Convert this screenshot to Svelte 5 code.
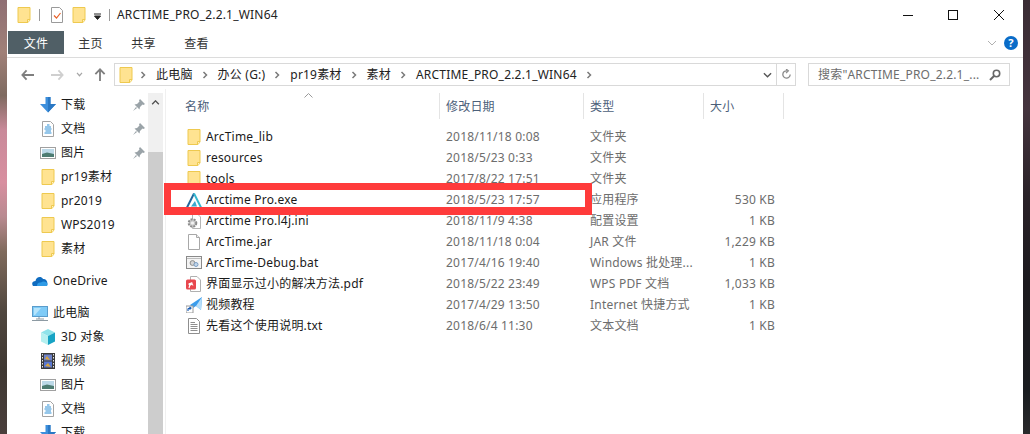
<script>
  const side = [
    { t: '下载', i: 'down', pin: true },
    { t: '文档', i: 'docs', pin: true },
    { t: '图片', i: 'pics', pin: true },
    { t: 'pr19素材', i: 'folder' },
    { t: 'pr2019', i: 'folder' },
    { t: 'WPS2019', i: 'folder' },
    { t: '素材', i: 'folder' },
    { t: 'OneDrive', i: 'cloud', top: true, gap: true },
    { t: '此电脑', i: 'pc', top: true, gap: true },
    { t: '3D 对象', i: 'cube' },
    { t: '视频', i: 'film' },
    { t: '图片', i: 'pics' },
    { t: '文档', i: 'docs' },
    { t: '下载', i: 'down' }
  ];
  const files = [
    ['ArcTime_lib', 'folder', '2018/11/18 0:08', '文件夹', ''],
    ['resources', 'folder', '2018/5/23 0:33', '文件夹', ''],
    ['tools', 'folder', '2017/8/22 17:51', '文件夹', ''],
    ['Arctime Pro.exe', 'arc', '2018/5/23 17:57', '应用程序', '530 KB'],
    ['Arctime Pro.l4j.ini', 'ini', '2018/11/9 4:38', '配置设置', '1 KB'],
    ['ArcTime.jar', 'blank', '2018/11/18 0:04', 'JAR 文件', '1,229 KB'],
    ['ArcTime-Debug.bat', 'bat', '2017/4/16 19:40', 'Windows 批处理...', '1 KB'],
    ['界面显示过小的解决方法.pdf', 'pdf', '2018/5/22 23:49', 'WPS PDF 文档', '1,033 KB'],
    ['视频教程', 'link', '2017/4/29 13:50', 'Internet 快捷方式', '1 KB'],
    ['先看这个使用说明.txt', 'txt', '2018/6/4 11:30', '文本文档', '1 KB']
  ];
  const crumbs = ['此电脑', '办公 (G:)', 'pr19素材', '素材', 'ARCTIME_PRO_2.2.1_WIN64'];
</script>

{#snippet chev()}
  <svg class="chev" viewBox="0 0 6 8"><path d="M1.5 1 L4.5 4 L1.5 7" fill="none" stroke="#7a7a7a" stroke-width="1.5" /></svg>
{/snippet}

{#snippet icon(n)}
  <svg class="ic" viewBox="0 0 16 16">
    {#if n === 'folder'}
      <path d="M2 .5 H14 V13 L12 15.5 H2 Z" fill="#ffe391" stroke="#eec94f" />
      <path d="M11.5 15.5 V12.5 H14" fill="#fff3c4" stroke="#eec94f" />
    {:else if n === 'down'}
      <path d="M5.5 0 H10.5 V7 H16 L8 15.5 L0 7 H5.5 Z" fill="#3d8fdc" />
      <path d="M8 0 H10.5 V7 H16 L8 15.5 Z" fill="#2a78c4" />
    {:else if n === 'docs'}
      <path d="M2.5 .5 H10.5 L13.5 3.5 V15.5 H2.5 Z" fill="#fff" stroke="#a3a3a3" />
      <path d="M5 6 H11 M4.5 8 H11.5 M5.5 10 H11 M4.5 12 H11.5 M7 4 H9.5" stroke="#2f8fd6" stroke-width="1.1" />
    {:else if n === 'pics'}
      <rect x=".5" y="2.5" width="15" height="11" fill="#fff" stroke="#a0a0a0" />
      <rect x="2" y="4" width="12" height="8" fill="#bcd9e8" />
      <path d="M2 9 L7 7.5 L14 9 V12 H2 Z" fill="#4d7c72" />
    {:else if n === 'cloud'}
      <path d="M1 13 C-1 10 1 8 3.5 8 C4 4 9 2.5 11 6 C14 5.5 16.5 9 15 13 Z" fill="#0f6cc0" />
      <path d="M5 13 C5 10 7 9 9 9.5 C11 7.5 15 8.5 15.5 11 L15 13 Z" fill="#2f9be6" />
    {:else if n === 'pc'}
      <rect x=".5" y="1.5" width="15" height="10" fill="#7fcbf7" stroke="#5a9ccb" />
      <path d="M2 3 H9 L3 10 H2 Z" fill="#b6e4fb" />
      <path d="M7 12 V14 M0 15.5 H16 M4 14 H12" stroke="#8d9aa3" />
    {:else if n === 'cube'}
      <path d="M8 0 L15 3.5 L8 7 L1 3.5 Z" fill="#8fe3ea" />
      <path d="M1 3.5 L8 7 V16 L1 12.5 Z" fill="#b5f0f0" />
      <path d="M15 3.5 L8 7 V16 L15 12.5 Z" fill="#17a3c4" />
    {:else if n === 'film'}
      <rect x="1" y="0" width="14" height="16" fill="#3a3a3a" />
      <rect x="4" y="1.5" width="8" height="6" fill="#6f83c9" />
      <rect x="4" y="8.5" width="8" height="6" fill="#5a78d0" />
      <path d="M5 6 L7 3 L10 7 Z M5 13 L8 10 L11 14 Z" fill="#d9a53a" />
      <path d="M2.5 1 V15 M13.5 1 V15" stroke="#e6e6e6" stroke-width="1" stroke-dasharray="1.5 1.5" />
    {:else if n === 'arc'}
      <path d="M1 15.5 L8 1.5" stroke="#22689c" stroke-width="2" fill="none" />
      <path d="M8 1.5 L15 15.5" stroke="#35b8d0" stroke-width="2" fill="none" />
      <path d="M5 14.5 L9 9 L11 14.5 Z" fill="#3aa9cf" />
    {:else if n === 'ini'}
      <path d="M6.5 .5 H11 L14.5 4 V15.5 H6.5 Z" fill="#fff" stroke="#b5b5b5" />
      <circle cx="6.5" cy="10" r="3.8" fill="#c9c9c9" stroke="#8c8c8c" stroke-width="2" stroke-dasharray="2 1.1" />
      <circle cx="6.5" cy="10" r="1.6" fill="#f2f2f2" />
    {:else if n === 'blank'}
      <path d="M2.5 .5 H10.5 L13.5 3.5 V15.5 H2.5 Z" fill="#fff" stroke="#a8a8a8" />
      <path d="M10.5 .5 V3.5 H13.5" fill="#eee" stroke="#a8a8a8" />
    {:else if n === 'bat'}
      <rect x=".5" y="1.5" width="15" height="12" fill="#f4f4f4" stroke="#8a8a8a" />
      <path d="M1 3.5 H15" stroke="#bdbdbd" />
      <circle cx="6.5" cy="8" r="2.4" fill="#d5d5d5" stroke="#8c8c8c" />
      <circle cx="10" cy="9.5" r="2" fill="#c3d6ea" stroke="#7b9ec4" />
    {:else if n === 'pdf'}
      <path d="M4.5 .5 H11 L14.5 4 V15.5 H4.5 Z" fill="#fff" stroke="#b0b0b0" />
      <rect x="0" y="3.5" width="10" height="10" rx="1.5" fill="#e8474e" />
      <path d="M3 12 C4 8 5 6 6 7 C7 8 3 10 3 8 C3 7 7 8 7 9.5" fill="none" stroke="#fff" stroke-width="1.1" />
    {:else if n === 'link'}
      <path d="M4 8 L16 0 L15 13 L10 9 L7 11 Z" fill="#3a9cec" />
      <path d="M16 0 L10 9 L15 13 Z" fill="#b7def9" />
      <rect x="0" y="9" width="7" height="7" fill="#fff" stroke="#9a9a9a" />
      <path d="M2 14 V12 C2 11.5 3 11 4.5 11 M3.5 10 L5 11 L3.5 12.5" fill="none" stroke="#1d5fb5" stroke-width="1.2" />
    {:else if n === 'txt'}
      <path d="M2.5 .5 H10.5 L13.5 3.5 V15.5 H2.5 Z" fill="#fff" stroke="#8f8f8f" />
      <path d="M4.5 4.5 H9 M4.5 6.5 H11.5 M4.5 8.5 H11.5 M4.5 10.5 H11.5 M4.5 12.5 H11.5" stroke="#8f8f8f" />
    {/if}
  </svg>
{/snippet}

<div class="screen">
  <div class="wall left"></div>
  <div class="win">
    <header class="title">
      <span class="t-folder">{@render icon('folder')}</span>
      <i class="sep"></i>
      <svg class="ic t-check" viewBox="0 0 16 16">
        <path d="M2.5 .5 H10.5 L13.5 3.5 V15.5 H2.5 Z" fill="#fff" stroke="#9a9a9a" />
        <path d="M5 8.5 L7.5 11 L11.5 6" fill="none" stroke="#e8622a" stroke-width="1.2" />
      </svg>
      <span class="t-folder">{@render icon('folder')}</span>
      <svg class="qa" viewBox="0 0 7 7"><path d="M0 1 H7 M.5 3 H6.5 L3.5 6.5 Z" stroke="#222" fill="#222" /></svg>
      <i class="sep s2"></i>
      <span class="wtitle">ARCTIME_PRO_2.2.1_WIN64</span>
      <div class="wc">
        <svg viewBox="0 0 10 10" class="wb"><path d="M0 5.5 H10" stroke="#111" /></svg>
        <svg viewBox="0 0 10 10" class="wb"><rect x=".5" y=".5" width="9" height="9" fill="none" stroke="#111" /></svg>
        <svg viewBox="0 0 10 10" class="wb"><path d="M0 0 L10 10 M10 0 L0 10" stroke="#111" /></svg>
      </div>
    </header>

    <nav class="tabs">
      <span class="tab on">文件</span>
      <span class="tab">主页</span>
      <span class="tab">共享</span>
      <span class="tab">查看</span>
      <svg class="rib" viewBox="0 0 10 6"><path d="M1 1 L5 5 L9 1" fill="none" stroke="#b0b0b0" /></svg>
      <span class="help">?</span>
    </nav>

    <div class="bar">
      <svg class="nav back" viewBox="0 0 14 12"><path d="M6 1 L1.5 6 L6 11 M1.5 6 H14" fill="none" stroke="#7f7f7f" stroke-width="2" /></svg>
      <svg class="nav fwd" viewBox="0 0 14 12"><path d="M8 1 L12.5 6 L8 11 M12.5 6 H0" fill="none" stroke="#cfcfcf" stroke-width="2" /></svg>
      <svg class="nav dd" viewBox="0 0 8 6"><path d="M1 1 L4 4.5 L7 1" fill="none" stroke="#a5a5a5" stroke-width="1.4" /></svg>
      <svg class="nav up" viewBox="0 0 12 14"><path d="M1 6.5 L6 1.5 L11 6.5 M6 1.5 V14" fill="none" stroke="#7f7f7f" stroke-width="2" /></svg>
      <div class="addr">
        <span class="a-folder">{@render icon('folder')}</span>
        {#each crumbs as c}
          {@render chev()}
          <span class="crumb">{c}</span>
        {/each}
        {@render chev()}
        <div class="a-end">
          <svg class="a-dd" viewBox="0 0 10 6"><path d="M1 1 L5 5 L9 1" fill="none" stroke="#555" stroke-width="1.5" /></svg>
          <span class="a-div"></span>
          <svg class="a-re" viewBox="0 0 12 12"><path d="M10 6 A4 4 0 1 1 6.5 2 M5.5 0 L8 2 L5.5 4.5" fill="none" stroke="#8a8a8a" stroke-width="1.4" /></svg>
        </div>
      </div>
      <div class="search">
        <span>搜索"ARCTIME_PRO_2.2.1_...</span>
        <svg viewBox="0 0 12 12"><circle cx="7.5" cy="4.5" r="3.2" fill="none" stroke="#666" stroke-width="1.6" /><path d="M5 7 L1 11" stroke="#666" stroke-width="2" /></svg>
      </div>
    </div>

    <div class="main">
      <aside class="side">
        {#each side as s}
          <div class="srow" class:top={s.top} class:gap={s.gap}>
            {@render icon(s.i)}
            <span>{s.t}</span>
            {#if s.pin}
              <svg class="pin" viewBox="0 0 12 12"><path d="M7 0 L12 5 L10.5 6 L9.5 5.5 L7 8 L6.5 10.5 L1.5 5.5 L4 5 L6.5 2.5 L6 1.5 Z M3 8 L0 12 L4 9 Z" fill="#9aa3a8" /></svg>
            {/if}
          </div>
        {/each}
      </aside>
      <div class="sb">
        <svg viewBox="0 0 10 6"><path d="M1 5 L5 1 L9 5" fill="none" stroke="#505050" stroke-width="1.6" /></svg>
        <div class="thumb"></div>
      </div>
      <section class="list">
        <svg class="sort" viewBox="0 0 9 5"><path d="M.5 4.5 L4.5 .5 L8.5 4.5" fill="none" stroke="#9a9a9a" /></svg>
        <div class="grid head">
          <span class="h">名称</span>
          <span class="h">修改日期</span>
          <span class="h">类型</span>
          <span class="h">大小</span>
        </div>
        <div class="rows">
          {#each files as f}
            <div class="grid row">
              <span class="name">{@render icon(f[1])}<b>{f[0]}</b></span>
              <span class="m">{f[2]}</span>
              <span class="m">{f[3]}</span>
              <span class="m size">{f[4]}</span>
            </div>
          {/each}
        </div>
        <div class="mark"></div>
      </section>
    </div>
  </div>
  <div class="wall right"></div>
</div>

<style>
  :global(body) { margin: 0; background: #fff; }
  .screen {
    width: 1030px; height: 434px; display: flex; overflow: hidden;
    font: 12px/16px "Noto Sans", "Noto Sans CJK SC", sans-serif; color: #1a1a1a; letter-spacing: .2px;
  }
  .wall { width: 7px; flex: none; }
  .wall.left { background: linear-gradient(180deg, #8f6f74 0, #a08078 12%, #7e6a60 22%, #c98a9a 30%, #d88fa0 42%, #b88a90 50%, #7f6a5c 58%, #4f463e 72%, #3f3832 85%, #4a3f3c 100%); }
  .wall.right { background: linear-gradient(180deg, #3a2c34 0, #45343e 25%, #2a2228 45%, #1c1a1e 65%, #1a1c20 90%, #2a2a2c 100%); }
  .win { flex: 1; min-width: 0; display: flex; flex-direction: column; background: #fff; }

  .ic { width: 16px; height: 16px; flex: none; }
  .title { height: 31px; flex: none; display: flex; align-items: center; padding-left: 9px; box-sizing: border-box; padding-bottom: 2px; }
  .t-folder { display: flex; }
  .sep { width: 1px; height: 12px; background: #9a9a9a; margin: 0 9px 0 7px; }
  .sep.s2 { margin: 0 7px 0 8px; }
  .t-check { margin-right: 6px; }
  .qa { width: 7px; height: 7px; margin-left: 7px; margin-top: 3px; }
  .wtitle { color: #222; }
  .wc { margin-left: auto; display: flex; gap: 35px; padding-right: 19px; }
  .wb { width: 10px; height: 10px; }
  .wb:last-child { margin-left: 1px; }

  .tabs { height: 23px; flex: none; display: flex; align-items: center; padding-left: 1px; }
  .tab { width: 53px; text-align: center; line-height: 21px; padding-top: 2px; color: #333; }
  .tab.on { width: 56px; background: #505f66; color: #fff; }
  .rib { width: 10px; height: 6px; margin-left: auto; margin-top: 1px; }
  .help {
    width: 14px; height: 14px; border-radius: 50%; background: #0a6cc8; color: #fff; font-weight: 700;
    font-size: 11px; line-height: 14px; text-align: center; margin: 1px 5px 0 7px;
  }

  .bar {
    height: 32px; flex: none; margin-top: 3px; border-top: 1px solid #dcdcdc; display: flex; align-items: center; box-sizing: border-box; padding-top: 2px;
  }
  .nav { flex: none; }
  .back { width: 13px; height: 12px; margin-left: 14px; }
  .fwd { width: 13px; height: 12px; margin-left: 17px; }
  .dd { width: 7px; height: 5px; margin-left: 12px; }
  .up { width: 12px; height: 13px; margin-left: 11px; }
  .addr {
    width: 682px; height: 23px; flex: none; box-sizing: border-box; margin-left: 8px; border: 1px solid #d9d9d9; display: flex; align-items: center;
  }
  .a-folder { display: flex; margin-left: 3px; margin-right: 6px; }
  .chev { width: 6px; height: 8px; flex: none; }
  .crumb { margin: 0 9px 0 10px; color: #222; white-space: nowrap; }
  .a-end { margin-left: auto; display: flex; align-items: center; height: 100%; }
  .a-dd { width: 9px; height: 6px; margin-right: 4px; }
  .a-div { width: 1px; height: 100%; background: #d9d9d9; }
  .a-re { width: 11px; height: 11px; margin: 0 3px 0 4px; }
  .search {
    width: 202px; height: 23px; flex: none; box-sizing: border-box; margin-left: 12px; border: 1px solid #d9d9d9; display: flex; align-items: center;
    justify-content: space-between; padding: 0 8px 0 9px; color: #6d6d6d;
  }
  .search span { white-space: nowrap; }
  .search svg { width: 12px; height: 12px; flex: none; }

  .main { flex: 1; min-height: 0; display: flex; }
  .side { width: 141px; flex: none; padding-top: 4px; position: relative; }
  .srow { height: 24px; display: flex; align-items: center; padding-left: 33px; position: relative; gap: 5px; white-space: nowrap; }
  .srow.top { padding-left: 25px; }
  .srow.gap { margin-top: 8px; }
  .pin { position: absolute; left: 126px; top: 6px; width: 12px; height: 12px; }
  .sb { width: 15px; flex: none; margin-top: 4px; background: #f0f0f0; display: flex; flex-direction: column; align-items: center; }
  .sb svg { width: 9px; height: 5px; margin-top: 7px; flex: none; }
  .thumb { width: 100%; flex: 1; margin-top: 47px; background: #cdcdcd; }

  .list { flex: 1; min-width: 0; position: relative; padding-left: 1px; border-left: 1px solid #f0f0f0; margin-left: 2px; }
  .sort { position: absolute; left: 138px; top: 4px; width: 9px; height: 5px; }
  .grid { display: grid; grid-template-columns: 273px 144px 120px 80px; }
  .head { margin-top: 4px; height: 26px; }
  .h { color: #4c607a; line-height: 24px; padding-top: 2px; border-right: 1px solid #e4e4e4; padding-left: 6px; }
  .h:first-child { padding-left: 18px; }
  .rows { margin-top: 7px; }
  .row { height: 21px; line-height: 21px; }
  .name { display: flex; align-items: center; gap: 4px; padding-left: 19px; white-space: nowrap; }
  .name b { font-weight: 400; color: #1a1a1a; }
  .m { color: #6d6d6d; padding-left: 6px; white-space: nowrap; }
  .size { text-align: right; padding-right: 9px; }
  .mark { position: absolute; left: -2px; top: 94px; width: 428px; height: 32px; box-sizing: border-box; border: 7px solid #ff3b3b; border-bottom-width: 8px; }
</style>
